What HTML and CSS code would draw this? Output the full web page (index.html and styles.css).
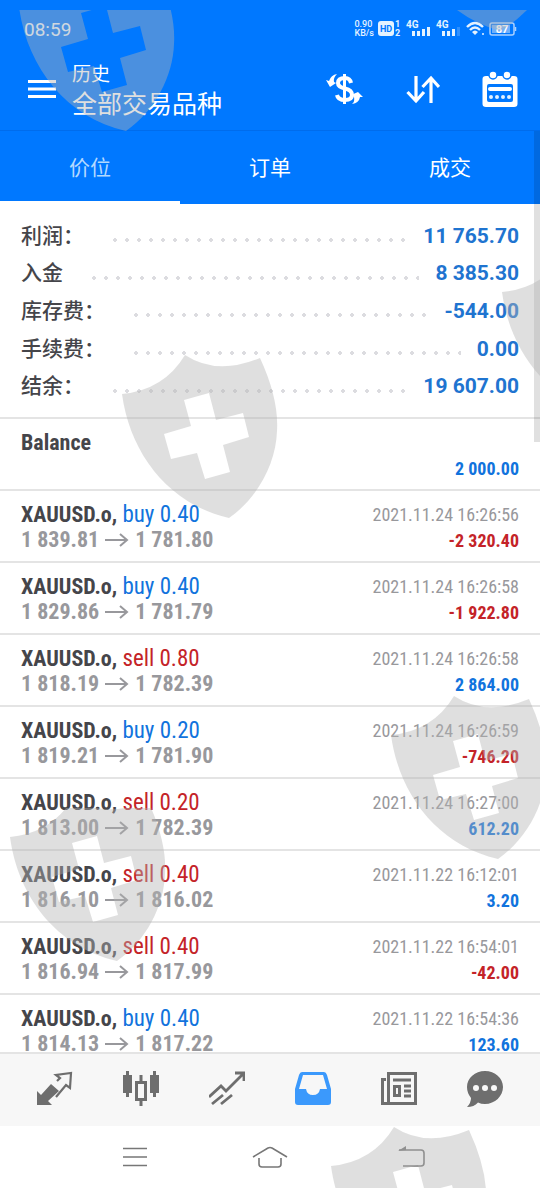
FILE: index.html
```html
<!DOCTYPE html>
<html lang="zh-CN">
<head>
<meta charset="utf-8">
<meta name="viewport" content="width=device-width, initial-scale=1">
<title>历史</title>
<link rel="stylesheet" href="styles.css">
</head>
<body>
<div class="app">
  <header class="top">
    <div class="status">
      <span class="clock">08:59</span>
      <div class="status-icons">
        <div class="rate"><span>0.90</span><span>KB/s</span></div>
        <svg width="24" height="20" viewBox="0 0 24 20"><rect x="0" y="2" width="16" height="15" rx="3" fill="#e4f2ff"/><text class="svg-hd" x="8" y="13" text-anchor="middle">HD</text><text class="svg-num" x="17" y="8">1</text><text class="svg-num" x="17" y="17">2</text></svg>
        <svg width="26" height="20" viewBox="0 0 26 20"><text class="svg-net" x="0" y="9">4G</text><path d="M6 12h3v5H6zM11 12h3v5h-3zM16 10h3v7h-3zM21 8h3v9h-3z" fill="#e4f2ff"/></svg>
        <svg width="26" height="20" viewBox="0 0 26 20"><text class="svg-net" x="0" y="9">4G</text><path d="M6 12h3v5H6zM11 12h3v5h-3zM16 10h3v7h-3z" fill="#e4f2ff"/><path d="M21 8h3v9h-3z" fill="#2f90ff"/></svg>
        <svg width="19" height="20" viewBox="0 0 19 20" fill="none" stroke="#e4f2ff" stroke-width="2.400"><path d="M1 8Q9 0 17 8M4 11Q9 6 14 11"/><path d="M6 13Q9 10 12 13L9 16Z" fill="#e4f2ff" stroke="none"/><circle cx="17" cy="15" r="1" fill="#e4f2ff" stroke="none"/></svg>
        <svg width="28" height="20" viewBox="0 0 28 20"><rect x="1" y="4" width="24" height="12" rx="2" fill="none" stroke="#a9d0ff" stroke-width="1.500"/><rect x="3" y="6" width="18" height="8" fill="#6fb0fb"/><path d="M26.500 8v4" stroke="#a9d0ff" stroke-width="1.500"/><text class="svg-batt" x="13" y="14" text-anchor="middle">87</text></svg>
      </div>
    </div>
    <div class="bar">
      <button class="icon-btn" aria-label="菜单"><svg width="28" height="20" viewBox="0 0 28 20"><path d="M0 2.500h28M0 10h28M0 17.500h28" stroke="#fff" stroke-width="3"/></svg></button>
      <div class="titles"><h1>历史</h1><p>全部交易品种</p></div>
      <div class="actions">
        <button class="icon-btn" aria-label="品种"><svg width="38" height="36" viewBox="0 0 38 36" fill="none" stroke="#fff"><path d="M25 12Q24 7 19 7Q12 7 12 12Q12 16 19 17.500Q26 19 26 24Q26 29 19 29Q12 29 11 24" stroke-width="4"/><path d="M18.500 3v30" stroke-width="3"/><path d="M0 9l4 7 6-4-2-1Q7 7 11 3Q5 4 3 10Z" fill="#fff" stroke="none"/><path d="M37 26l-5-5-7 3 3 2Q29 31 26 33Q33 32 34 26Z" fill="#fff" stroke="none"/></svg></button>
        <button class="icon-btn" aria-label="排序"><svg width="34" height="30" viewBox="0 0 34 30" fill="none" stroke="#fff" stroke-width="3.200"><path d="M10 2v25M1.500 18l8.500 9 8-9M25 29V4M16.500 13L25 4l8 9"/></svg></button>
        <button class="icon-btn" aria-label="日期"><svg width="36" height="36" viewBox="0 0 36 36"><path fill-rule="evenodd" fill="#fff" d="M4 5H32Q35.500 5 35.500 8V33Q35.500 36 32 36H4Q.5 36 .5 33V8Q.5 5 4 5ZM5 15V29Q5 31 7 31H29Q31 31 31 29V15Q31 13 29 13H7Q5 13 5 15Z"/><g fill="#fff" stroke="#0078ff" stroke-width="1.500"><circle cx="11" cy="4" r="4"/><circle cx="25" cy="4" r="4"/></g><path d="M8 18h20" stroke="#fff" stroke-width="4" stroke-linecap="round"/><path d="M9 26h20" stroke="#e4f2ff" stroke-width="4" stroke-linecap="round" stroke-dasharray="0 6"/></svg></button>
      </div>
    </div>
  </header>
  <nav class="tabs">
    <button class="tab active">价位</button><button class="tab">订单</button><button class="tab">成交</button>
  </nav>
  <main class="content">
    <dl class="summary">
      <div><dt>利润：</dt><dd>11 765.70</dd></div>
      <div><dt>入金</dt><dd>8 385.30</dd></div>
      <div><dt>库存费：</dt><dd>-544.00</dd></div>
      <div><dt>手续费：</dt><dd>0.00</dd></div>
      <div><dt>结余：</dt><dd>19 607.00</dd></div>
    </dl>
    <ul class="deals">
      <li><div class="left"><b>Balance</b></div><div class="right"><time></time><strong class="buy">2 000.00</strong></div></li>
      <li><div class="left"><p><b>XAUUSD.o,</b> <span class="buy">buy 0.40</span></p><p class="prices">1 839.81 <svg class="arrow" viewBox="0 0 24 14"><path d="M0 7h22M15 1l7 6-7 6"/></svg> 1 781.80</p></div><div class="right"><time>2021.11.24 16:26:56</time><strong class="sell">-2 320.40</strong></div></li>
      <li><div class="left"><p><b>XAUUSD.o,</b> <span class="buy">buy 0.40</span></p><p class="prices">1 829.86 <svg class="arrow" viewBox="0 0 24 14"><path d="M0 7h22M15 1l7 6-7 6"/></svg> 1 781.79</p></div><div class="right"><time>2021.11.24 16:26:58</time><strong class="sell">-1 922.80</strong></div></li>
      <li><div class="left"><p><b>XAUUSD.o,</b> <span class="sell">sell 0.80</span></p><p class="prices">1 818.19 <svg class="arrow" viewBox="0 0 24 14"><path d="M0 7h22M15 1l7 6-7 6"/></svg> 1 782.39</p></div><div class="right"><time>2021.11.24 16:26:58</time><strong class="buy">2 864.00</strong></div></li>
      <li><div class="left"><p><b>XAUUSD.o,</b> <span class="buy">buy 0.20</span></p><p class="prices">1 819.21 <svg class="arrow" viewBox="0 0 24 14"><path d="M0 7h22M15 1l7 6-7 6"/></svg> 1 781.90</p></div><div class="right"><time>2021.11.24 16:26:59</time><strong class="sell">-746.20</strong></div></li>
      <li><div class="left"><p><b>XAUUSD.o,</b> <span class="sell">sell 0.20</span></p><p class="prices">1 813.00 <svg class="arrow" viewBox="0 0 24 14"><path d="M0 7h22M15 1l7 6-7 6"/></svg> 1 782.39</p></div><div class="right"><time>2021.11.24 16:27:00</time><strong class="buy">612.20</strong></div></li>
      <li><div class="left"><p><b>XAUUSD.o,</b> <span class="sell">sell 0.40</span></p><p class="prices">1 816.10 <svg class="arrow" viewBox="0 0 24 14"><path d="M0 7h22M15 1l7 6-7 6"/></svg> 1 816.02</p></div><div class="right"><time>2021.11.22 16:12:01</time><strong class="buy">3.20</strong></div></li>
      <li><div class="left"><p><b>XAUUSD.o,</b> <span class="sell">sell 0.40</span></p><p class="prices">1 816.94 <svg class="arrow" viewBox="0 0 24 14"><path d="M0 7h22M15 1l7 6-7 6"/></svg> 1 817.99</p></div><div class="right"><time>2021.11.22 16:54:01</time><strong class="sell">-42.00</strong></div></li>
      <li><div class="left"><p><b>XAUUSD.o,</b> <span class="buy">buy 0.40</span></p><p class="prices">1 814.13 <svg class="arrow" viewBox="0 0 24 14"><path d="M0 7h22M15 1l7 6-7 6"/></svg> 1 817.22</p></div><div class="right"><time>2021.11.22 16:54:36</time><strong class="buy">123.60</strong></div></li>
    </ul>
  </main>
  <nav class="bottom">
    <button class="icon-btn" aria-label="行情"><svg width="36" height="36" viewBox="0 0 36 36"><path d="M0 34V20l4 4 10-11 8 7-11 10 4 4Z" fill="#6e6e6e"/><path d="M20 10l3-3-4-3 15-2-1 15-4-3L19 26" fill="none" stroke="#6e6e6e" stroke-width="2.200"/></svg></button>
    <button class="icon-btn" aria-label="图表"><svg width="36" height="36" viewBox="0 0 36 36"><path d="M3 0h3v4h3v18H6v4H3v-4H0V4h3zM30 0h3v4h3v18h-3v4h-3v-4h-3V4h3z" fill="#6e6e6e"/><path d="M18 4v7M18 29v6" stroke="#6e6e6e" stroke-width="3"/><rect x="13.500" y="11.500" width="9" height="17" fill="none" stroke="#6e6e6e" stroke-width="3"/></svg></button>
    <button class="icon-btn" aria-label="交易"><svg width="36" height="36" viewBox="0 0 36 36" fill="none" stroke="#6e6e6e" stroke-width="2.800"><path d="M0 26L12 15l5 5L34 3M3 33l11-9M12 33l11-9M26 2h9v8"/></svg></button>
    <button class="icon-btn" aria-label="历史" aria-current="page"><svg width="36" height="36" viewBox="0 0 36 36"><path d="M7 1H29Q31 1 32 4L36 18V31Q36 34 33 34H3Q0 34 0 31V18L4 4Q5 1 7 1ZM8 4L4 18H11Q12 24 18 24T25 18H32L28 4Z" fill="#3b99fc" fill-rule="evenodd"/></svg></button>
    <button class="icon-btn" aria-label="新闻"><svg width="36" height="36" viewBox="0 0 36 36" fill="none" stroke="#6e6e6e" stroke-width="3"><path d="M7.500 32.500V2.500h27v30H1.500V8.500H5M12 9h18M23 15h7M23 20h7M23 25h7"/><rect x="13.500" y="15.500" width="5" height="9"/></svg></button>
    <button class="icon-btn" aria-label="消息"><svg width="36" height="36" viewBox="0 0 36 36"><path d="M18 0C28 0 36 7 36 16S28 33 18 33Q14 33 11 31.500Q7 36 0 36Q4 32 4 27Q0 22 0 16C0 7 8 0 18 0Z" fill="#6e6e6e"/><g fill="#f8f8f8"><circle cx="9" cy="17" r="3"/><circle cx="18" cy="17" r="3"/><circle cx="27" cy="17" r="3"/></g></svg></button>
  </nav>
  <nav class="system">
    <button class="icon-btn" aria-label="最近任务"><svg width="26" height="20" viewBox="0 0 26 20"><path d="M1 1.500h24M1 10h24M1 18.500h24" stroke="#777" stroke-width="1.600"/></svg></button>
    <button class="icon-btn" aria-label="主屏幕"><svg width="36" height="24" viewBox="0 0 36 24" fill="none" stroke="#777" stroke-width="1.600"><path d="M1 12L16 3Q18 2 20 3L35 12M7 13v6Q7 22 10 22H26Q29 22 29 19V13"/></svg></button>
    <button class="icon-btn" aria-label="返回"><svg width="40" height="22" viewBox="0 0 40 22" fill="none" stroke="#777" stroke-width="1.600"><path d="M14 4H36Q39 4 39 7V17Q39 20 36 20H18"/><path d="M13 5L21 0V4Z" fill="#777" stroke="none"/></svg></button>
  </nav>
  <div class="scroll-thumb"></div>
  <svg class="shields" aria-hidden="true">
    <defs>
      <symbol id="shield" viewBox="0 0 156 164"><path fill-rule="evenodd" d="M0 39Q42 35 63 0Q95 21 138 3Q157 44 155 76C154 108 136 143 107 163C46 149 8 98 0 39ZM62 45L69 71 42 79 49 104 75 98 83 124 108 117 101 90 127 82 121 58 94 65 87 38Z"/></symbol>
      <clipPath id="cut-top"><rect y="10" width="540" height="200"/></clipPath>
      <clipPath id="cut-mid"><rect y="808" width="540" height="200"/></clipPath>
    </defs>
    <g clip-path="url(#cut-top)"><use href="#shield" x="19" y="-32" width="156" height="164"/><path d="M457 10H527Q513 24 500 31Q476 24 457 10Z"/></g>
    <use href="#shield" x="502" y="253" width="156" height="164"/>
    <use href="#shield" x="122" y="355" width="156" height="164"/>
    <use href="#shield" x="391" y="696" width="156" height="164"/>
    <g clip-path="url(#cut-mid)"><use href="#shield" x="10" y="798" width="156" height="164"/></g>
    <use href="#shield" x="331" y="1127" width="156" height="164"/>
  </svg>
</div>
</body>
</html>
```
FILE: styles.css
```css
* { box-sizing: border-box; margin: 0; padding: 0; }
body { font-family: Roboto, "Noto Sans CJK SC", sans-serif; background: #fff; color: #45454a; }
button { border: 0; background: none; font: inherit; color: inherit; }
svg { display: block; }

.app { position: relative; display: flex; flex-direction: column; height: 100vh; overflow: hidden; }

.top { background: #0078ff; color: #fff; border-bottom: 1px solid #006cec; }
.status { display: flex; justify-content: space-between; align-items: center; height: 58px; padding: 0 23px 0 24px; }
.clock { font-size: 19px; color: #e4f2ff; }
.status-icons { display: flex; align-items: center; gap: 4px; }
.rate { display: flex; flex-direction: column; font-size: 9px; line-height: 9px; font-weight: 500; color: #e4f2ff; }
.svg-hd { font: 700 9px Roboto, sans-serif; fill: #0078ff; }
.svg-num { font: 700 9px Roboto, sans-serif; fill: #e4f2ff; }
.svg-net { font: 700 10px Roboto, sans-serif; fill: #e4f2ff; }
.svg-batt { font: 700 11px Roboto, sans-serif; fill: #fff; }

.bar { display: flex; align-items: center; height: 72px; padding: 0 22px 10px 28px; }
.titles { margin-left: 16px; padding-bottom: 2px; font-family: "Noto Sans CJK SC", sans-serif; }
.titles h1 { font-size: 19px; line-height: 28px; font-weight: 400; }
.titles p { font-size: 25px; line-height: 30px; }
.actions { display: flex; align-items: center; gap: 42px; margin-left: auto; }

.tabs { display: flex; background: #0078ff; color: #fff; }
.tab { flex: 1; height: 73px; border-bottom: 3px solid #0078ff; font: 400 21px "Noto Sans CJK SC", sans-serif; }
.tab.active { border-bottom-color: #fff; color: #b3d9ff; }

.content { flex: 1; min-height: 0; overflow: hidden; }
.summary { display: grid; grid-auto-rows: 1fr; min-height: 215px; padding: 13px 21px 12px; border-bottom: 2px solid #e4e4e4; }
.summary div { display: flex; align-items: center; }
.summary div::before { content: ""; order: 1; flex: 1; height: 4px; margin: 9px 16px 0 29px; background: radial-gradient(circle at 2px 2px, #dcdce0 2px, transparent 2px) 0 0 / 12px 4px repeat-x; }
.summary dt { padding-bottom: 4px; font: 500 21px "Noto Sans CJK SC", sans-serif; }
.summary dd { order: 2; font-weight: 700; font-size: 21px; color: #1f74d0; }

.deals { list-style: none; font-family: "Roboto Condensed", "Liberation Sans Narrow", Roboto, sans-serif; }
.deals li { display: flex; justify-content: space-between; height: 72px; padding: 11px 21px 0; border-bottom: 2px solid #e4e4e4; }
.left { font-size: 23px; line-height: 25px; }
.left b { font-size: 22px; }
.prices { display: flex; align-items: center; gap: 6px; color: #98989c; font-size: 22px; font-weight: 700; }
.arrow { width: 24px; height: 14px; fill: none; stroke: #98989c; stroke-width: 2; }
.right { display: flex; flex-direction: column; align-items: flex-end; font-size: 18px; line-height: 26px; }
.right time { min-height: 26px; color: #98989c; }
.buy { color: #1173dd; }
.sell { color: #c42328; }

.bottom { display: flex; flex: none; height: 74px; padding: 0 12px 2px; background: #f7f7f7; border-top: 2px solid #e4e4e4; }
.bottom .icon-btn, .system .icon-btn { flex: 1; display: flex; align-items: center; justify-content: center; }
.system { display: flex; flex: none; height: 62px; padding: 0 68px; }

.scroll-thumb { position: absolute; top: 131px; right: 0; width: 6px; height: 311px; background: rgba(0, 0, 0, .12); }
.shields { position: absolute; inset: 0; width: 100%; height: 100%; fill: rgba(178, 178, 178, .42); pointer-events: none; }
```
